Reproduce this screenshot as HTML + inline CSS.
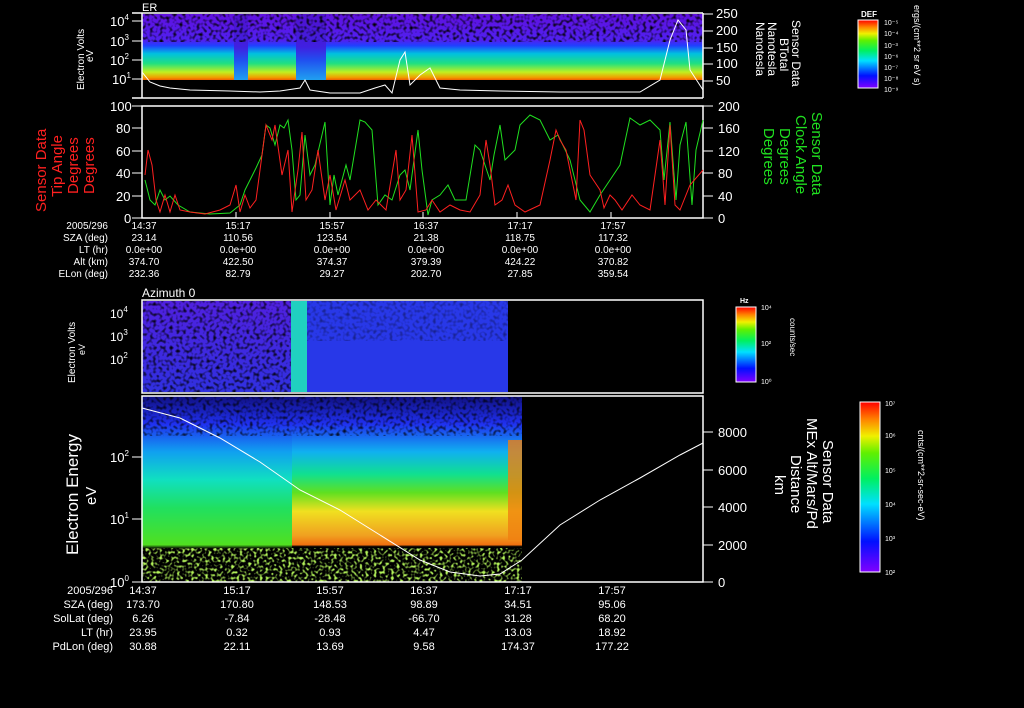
<!DOCTYPE html>
<html><head><meta charset="utf-8"><style>
html,body{margin:0;padding:0;background:#000;}
svg{display:block;font-family:"Liberation Sans",sans-serif;}
</style></head><body>
<svg width="1024" height="708" viewBox="0 0 1024 708" xmlns="http://www.w3.org/2000/svg">
<defs>
<linearGradient id="p1" x1="0" y1="0" x2="0" y2="1">
<stop offset="0" stop-color="#6010e0"/><stop offset="0.4" stop-color="#5020f0"/><stop offset="0.48" stop-color="#2040ff"/><stop offset="0.6" stop-color="#00c0e0"/><stop offset="0.75" stop-color="#20e080"/><stop offset="0.88" stop-color="#c0f020"/><stop offset="0.96" stop-color="#f0a000"/><stop offset="1" stop-color="#f06000"/>
</linearGradient>
<linearGradient id="p1b" x1="0" y1="0" x2="0" y2="1">
<stop offset="0" stop-color="#5010d0"/><stop offset="0.5" stop-color="#4020e0"/><stop offset="0.7" stop-color="#2050f0"/><stop offset="1" stop-color="#20a0f0"/>
</linearGradient>
<linearGradient id="p3" x1="0" y1="0" x2="0" y2="1">
<stop offset="0" stop-color="#5020e0"/><stop offset="1" stop-color="#3030e0"/>
</linearGradient>
<linearGradient id="p4a" x1="0" y1="0" x2="0" y2="1">
<stop offset="0" stop-color="#101080"/><stop offset="0.15" stop-color="#2030f0"/><stop offset="0.3" stop-color="#10a0f0"/><stop offset="0.45" stop-color="#10e0c0"/><stop offset="0.6" stop-color="#20e060"/><stop offset="0.8" stop-color="#50e020"/><stop offset="0.82" stop-color="#000"/><stop offset="1" stop-color="#000"/>
</linearGradient>
<linearGradient id="p4b" x1="0" y1="0" x2="0" y2="1">
<stop offset="0" stop-color="#101080"/><stop offset="0.15" stop-color="#2030f0"/><stop offset="0.3" stop-color="#10b0f0"/><stop offset="0.42" stop-color="#10e090"/><stop offset="0.52" stop-color="#60e020"/><stop offset="0.62" stop-color="#f0e020"/><stop offset="0.75" stop-color="#f0a020"/><stop offset="0.8" stop-color="#f07010"/><stop offset="0.81" stop-color="#000"/><stop offset="1" stop-color="#000"/>
</linearGradient>
<linearGradient id="cb" x1="0" y1="1" x2="0" y2="0">
<stop offset="0" stop-color="#8000ff"/><stop offset="0.18" stop-color="#0010ff"/><stop offset="0.4" stop-color="#00e0ff"/><stop offset="0.55" stop-color="#00f060"/><stop offset="0.7" stop-color="#60f000"/><stop offset="0.8" stop-color="#f0f000"/><stop offset="0.9" stop-color="#ff8000"/><stop offset="1" stop-color="#ff0000"/>
</linearGradient>
<filter id="noise" x="0" y="0" width="1" height="1"><feTurbulence type="fractalNoise" baseFrequency="0.3" numOctaves="1" seed="3"/><feColorMatrix values="0 0 0 0 0  0 0 0 0 0  0 0 0 0 0  0 0 0 -3 1.6"/></filter>
<filter id="gspeck" x="0" y="0" width="1" height="1"><feTurbulence type="fractalNoise" baseFrequency="0.35" numOctaves="1" seed="7"/><feColorMatrix values="0 0 0 0 0.45  0 0 0 0 0.9  0 0 0 0 0.1  0 0 0 -4 2.1"/></filter>
</defs>

<!-- Panel 1 -->
<rect x="142" y="14" width="561" height="66" fill="url(#p1)"/>
<rect x="234" y="14" width="14" height="66" fill="url(#p1b)"/>
<rect x="296" y="14" width="30" height="66" fill="url(#p1b)"/>
<rect x="142" y="14" width="561" height="28" filter="url(#noise)"/>
<polyline fill="none" stroke="#fff" stroke-width="1" points="142,72 150,82 160,86 170,88 190,90 230,91 260,92 280,91 300,88 305,80 310,90 330,93 360,93 375,88 385,85 392,93 400,60 405,52 410,85 420,75 430,68 440,88 460,90 500,91 560,92 640,92 660,80 670,40 678,20 686,30 690,70 703,90"/>
<g stroke="#fff" fill="none" stroke-width="1.5">
<line x1="132" y1="13" x2="703" y2="13"/><line x1="132" y1="98" x2="703" y2="98"/>
<line x1="142" y1="13" x2="142" y2="98"/><line x1="703" y1="13" x2="703" y2="98"/>
</g>
<g stroke="#fff" stroke-width="1">
<line x1="132" y1="21" x2="142" y2="21"/><line x1="132" y1="41" x2="142" y2="41"/><line x1="132" y1="60" x2="142" y2="60"/><line x1="132" y1="79" x2="142" y2="79"/>
<line x1="703" y1="14" x2="713" y2="14"/><line x1="703" y1="31" x2="713" y2="31"/><line x1="703" y1="48" x2="713" y2="48"/><line x1="703" y1="64" x2="713" y2="64"/><line x1="703" y1="81" x2="713" y2="81"/>
</g>
<g fill="#fff" font-size="13">
<text x="142" y="11" font-size="11">ER</text>
<text x="110" y="26">10<tspan font-size="8" dy="-6">4</tspan></text>
<text x="110" y="46">10<tspan font-size="8" dy="-6">3</tspan></text>
<text x="110" y="65">10<tspan font-size="8" dy="-6">2</tspan></text>
<text x="112" y="84">10<tspan font-size="8" dy="-6">1</tspan></text>
<text x="716" y="18">250</text><text x="716" y="35">200</text><text x="716" y="52">150</text><text x="716" y="68">100</text><text x="716" y="85">50</text>
</g>
<text transform="translate(84,90) rotate(-90)" fill="#fff" font-size="10">Electron Volts</text>
<text transform="translate(93,62) rotate(-90)" fill="#fff" font-size="10">eV</text>
<g fill="#fff" font-size="12">
<text transform="translate(792,20) rotate(90)">Sensor Data</text>
<text transform="translate(780,38) rotate(90)">BTotal</text>
<text transform="translate(768,22) rotate(90)">Nanotesla</text>
<text transform="translate(756,22) rotate(90)">Nanotesla</text>
</g>
<rect x="858" y="20" width="20" height="68" fill="url(#cb)" stroke="#fff"/>
<text x="861" y="17" fill="#fff" font-size="8" font-weight="bold">DEF</text>
<g fill="#fff" font-size="7"><text x="884" y="25">10⁻⁵</text><text x="884" y="36">10⁻⁴</text><text x="884" y="48">10⁻³</text><text x="884" y="59">10⁻⁶</text><text x="884" y="70">10⁻⁷</text><text x="884" y="81">10⁻⁸</text><text x="884" y="92">10⁻⁹</text></g>
<text transform="translate(914,5) rotate(90)" fill="#fff" font-size="9">ergs/(cm**2 sr eV s)</text>

<!-- Panel 2 -->
<g stroke="#fff" fill="none" stroke-width="1.5">
<rect x="142" y="106" width="561" height="112"/>
</g>
<g stroke="#fff" stroke-width="1">
<line x1="132" y1="106" x2="142" y2="106"/><line x1="132" y1="128" x2="142" y2="128"/><line x1="132" y1="151" x2="142" y2="151"/><line x1="132" y1="173" x2="142" y2="173"/><line x1="132" y1="196" x2="142" y2="196"/><line x1="132" y1="218" x2="142" y2="218"/>
<line x1="703" y1="106" x2="713" y2="106"/><line x1="703" y1="128" x2="713" y2="128"/><line x1="703" y1="151" x2="713" y2="151"/><line x1="703" y1="173" x2="713" y2="173"/><line x1="703" y1="196" x2="713" y2="196"/><line x1="703" y1="218" x2="713" y2="218"/>
<line x1="236" y1="218" x2="236" y2="212"/><line x1="330" y1="218" x2="330" y2="212"/><line x1="423" y1="218" x2="423" y2="212"/><line x1="517" y1="218" x2="517" y2="212"/><line x1="611" y1="218" x2="611" y2="212"/>
</g>
<polyline fill="none" stroke="#20e020" stroke-width="1" points="145,180 150,200 155,205 160,190 165,200 170,196 178,205 190,212 210,214 230,213 240,205 245,190 250,180 256,168 262,155 266,125 270,128 275,145 280,125 284,128 288,120 292,150 296,200 300,195 305,135 310,175 315,165 325,122 330,205 334,175 338,195 346,165 350,180 360,120 365,122 372,130 378,205 385,195 392,200 400,175 405,170 410,190 418,130 422,170 428,215 432,200 440,195 448,185 455,200 466,200 475,145 480,150 485,165 490,180 494,155 500,125 505,160 510,155 515,150 520,125 530,115 540,120 550,140 558,135 570,160 580,200 590,212 600,195 610,180 620,165 630,118 640,125 650,120 660,130 664,180 670,122 676,200 680,145 686,122 692,205 696,150 703,120"/>
<polyline fill="none" stroke="#ff2020" stroke-width="1" points="145,175 148,150 152,165 156,200 160,212 165,195 170,212 175,195 180,210 190,212 205,214 220,210 230,205 236,185 240,212 245,195 250,208 256,200 262,155 266,125 272,140 275,125 282,175 288,150 292,212 298,170 302,132 306,200 312,190 318,150 325,200 330,175 336,210 345,180 350,200 360,190 368,210 376,200 386,210 396,150 400,200 406,190 412,135 418,212 426,210 432,200 440,212 450,205 460,210 470,212 480,195 486,140 490,165 495,205 502,200 508,185 515,205 525,212 540,205 550,160 556,130 560,140 566,150 572,180 576,200 580,120 584,130 590,175 600,190 604,208 610,195 615,200 622,210 632,195 640,205 650,210 660,140 665,205 670,125 675,205 680,210 690,185 703,170"/>
<g fill="#fff" font-size="13">
<text x="110" y="111">100</text><text x="116" y="133">80</text><text x="116" y="156">60</text><text x="116" y="178">40</text><text x="116" y="201">20</text><text x="124" y="223">0</text>
<text x="718" y="111">200</text><text x="718" y="133">160</text><text x="718" y="156">120</text><text x="718" y="178">80</text><text x="718" y="201">40</text><text x="718" y="223">0</text>
</g>
<g fill="#ff2020" font-size="15">
<text transform="translate(46,212) rotate(-90)">Sensor Data</text>
<text transform="translate(62,197) rotate(-90)">Tip Angle</text>
<text transform="translate(78,194) rotate(-90)">Degrees</text>
<text transform="translate(94,194) rotate(-90)">Degrees</text>
</g>
<g fill="#20e020" font-size="15">
<text transform="translate(812,112) rotate(90)">Sensor Data</text>
<text transform="translate(796,115) rotate(90)">Clock Angle</text>
<text transform="translate(780,128) rotate(90)">Degrees</text>
<text transform="translate(764,128) rotate(90)">Degrees</text>
</g>
<g fill="#fff" font-size="10">
<g text-anchor="end"><text x="108" y="229">2005/296</text><text x="108" y="241">SZA (deg)</text><text x="108" y="253">LT (hr)</text><text x="108" y="265">Alt (km)</text><text x="108" y="277">ELon (deg)</text></g>
<g text-anchor="middle">
<text x="144" y="229">14:37</text><text x="144" y="241">23.14</text><text x="144" y="253">0.0e+00</text><text x="144" y="265">374.70</text><text x="144" y="277">232.36</text>
<text x="238" y="229">15:17</text><text x="238" y="241">110.56</text><text x="238" y="253">0.0e+00</text><text x="238" y="265">422.50</text><text x="238" y="277">82.79</text>
<text x="332" y="229">15:57</text><text x="332" y="241">123.54</text><text x="332" y="253">0.0e+00</text><text x="332" y="265">374.37</text><text x="332" y="277">29.27</text>
<text x="426" y="229">16:37</text><text x="426" y="241">21.38</text><text x="426" y="253">0.0e+00</text><text x="426" y="265">379.39</text><text x="426" y="277">202.70</text>
<text x="520" y="229">17:17</text><text x="520" y="241">118.75</text><text x="520" y="253">0.0e+00</text><text x="520" y="265">424.22</text><text x="520" y="277">27.85</text>
<text x="613" y="229">17:57</text><text x="613" y="241">117.32</text><text x="613" y="253">0.0e+00</text><text x="613" y="265">370.82</text><text x="613" y="277">359.54</text>
</g></g>

<!-- Panel 3 -->
<text x="142" y="297" fill="#fff" font-size="12">Azimuth 0</text>
<rect x="142" y="301" width="366" height="91" fill="url(#p3)"/>
<rect x="291" y="301" width="16" height="91" fill="#20d0c0"/>
<rect x="307" y="301" width="201" height="91" fill="#2838e8"/>
<rect x="142" y="301" width="149" height="91" filter="url(#noise)" opacity="0.9"/>
<rect x="307" y="301" width="201" height="40" filter="url(#noise)" opacity="0.4"/>
<g stroke="#fff" fill="none" stroke-width="1.5"><rect x="142" y="300" width="561" height="93"/></g>
<g fill="#fff" font-size="12"><text x="110" y="318">10<tspan font-size="8" dy="-6">4</tspan></text><text x="110" y="341">10<tspan font-size="8" dy="-6">3</tspan></text><text x="110" y="364">10<tspan font-size="8" dy="-6">2</tspan></text></g>
<text transform="translate(75,383) rotate(-90)" fill="#fff" font-size="10">Electron Volts</text>
<text transform="translate(85,355) rotate(-90)" fill="#fff" font-size="9">eV</text>
<rect x="736" y="307" width="20" height="75" fill="url(#cb)" stroke="#fff"/>
<text x="740" y="303" fill="#fff" font-size="7" font-weight="bold">Hz</text>
<g fill="#fff" font-size="7"><text x="761" y="310">10⁴</text><text x="761" y="346">10²</text><text x="761" y="384">10⁰</text></g>
<text transform="translate(790,318) rotate(90)" fill="#fff" font-size="8">counts/sec</text>

<!-- Panel 4 -->
<rect x="142" y="396" width="150" height="186" fill="url(#p4a)"/>
<rect x="292" y="396" width="230" height="186" fill="url(#p4b)"/>
<rect x="142" y="396" width="380" height="40" filter="url(#noise)" opacity="0.8"/>
<rect x="142" y="548" width="380" height="34" filter="url(#gspeck)"/>
<rect x="508" y="440" width="14" height="100" fill="#f08010" opacity="0.8"/>
<polyline fill="none" stroke="#fff" stroke-width="1" points="142,408 180,418 220,438 260,462 300,490 340,510 380,535 420,560 450,572 480,576 500,574 522,560 560,525 600,500 640,478 680,455 703,443"/>
<g stroke="#fff" fill="none" stroke-width="1.5"><rect x="142" y="396" width="561" height="186"/></g>
<g stroke="#fff" stroke-width="1">
<line x1="703" y1="432" x2="713" y2="432"/><line x1="703" y1="470" x2="713" y2="470"/><line x1="703" y1="507" x2="713" y2="507"/><line x1="703" y1="545" x2="713" y2="545"/><line x1="703" y1="582" x2="713" y2="582"/>
<line x1="132" y1="457" x2="142" y2="457"/><line x1="132" y1="519" x2="142" y2="519"/><line x1="132" y1="582" x2="142" y2="582"/>
</g>
<g fill="#fff" font-size="13">
<text x="110" y="462">10<tspan font-size="8" dy="-6">2</tspan></text><text x="110" y="524">10<tspan font-size="8" dy="-6">1</tspan></text><text x="110" y="587">10<tspan font-size="8" dy="-6">0</tspan></text>
<text x="718" y="437">8000</text><text x="718" y="475">6000</text><text x="718" y="512">4000</text><text x="718" y="550">2000</text><text x="718" y="587">0</text>
</g>
<text transform="translate(78,555) rotate(-90)" fill="#fff" font-size="17">Electron Energy</text>
<text transform="translate(96,505) rotate(-90)" fill="#fff" font-size="15">eV</text>
<g fill="#fff" font-size="15">
<text transform="translate(823,440) rotate(90)">Sensor Data</text>
<text transform="translate(807,418) rotate(90)">MEx Alt/Mars/Pd</text>
<text transform="translate(791,455) rotate(90)">Distance</text>
<text transform="translate(775,475) rotate(90)">km</text>
</g>
<rect x="860" y="402" width="20" height="170" fill="url(#cb)" stroke="#fff"/>
<g fill="#fff" font-size="7"><text x="885" y="406">10⁷</text><text x="885" y="438">10⁶</text><text x="885" y="473">10⁵</text><text x="885" y="507">10⁴</text><text x="885" y="541">10³</text><text x="885" y="575">10²</text></g>
<text transform="translate(918,430) rotate(90)" fill="#fff" font-size="9">cnts/(cm**2-sr-sec-eV)</text>
<g fill="#fff" font-size="11">
<g text-anchor="end"><text x="113" y="594">2005/296</text><text x="113" y="608">SZA (deg)</text><text x="113" y="622">SolLat (deg)</text><text x="113" y="636">LT (hr)</text><text x="113" y="650">PdLon (deg)</text></g>
<g text-anchor="middle">
<text x="143" y="594">14:37</text><text x="143" y="608">173.70</text><text x="143" y="622">6.26</text><text x="143" y="636">23.95</text><text x="143" y="650">30.88</text>
<text x="237" y="594">15:17</text><text x="237" y="608">170.80</text><text x="237" y="622">-7.84</text><text x="237" y="636">0.32</text><text x="237" y="650">22.11</text>
<text x="330" y="594">15:57</text><text x="330" y="608">148.53</text><text x="330" y="622">-28.48</text><text x="330" y="636">0.93</text><text x="330" y="650">13.69</text>
<text x="424" y="594">16:37</text><text x="424" y="608">98.89</text><text x="424" y="622">-66.70</text><text x="424" y="636">4.47</text><text x="424" y="650">9.58</text>
<text x="518" y="594">17:17</text><text x="518" y="608">34.51</text><text x="518" y="622">31.28</text><text x="518" y="636">13.03</text><text x="518" y="650">174.37</text>
<text x="612" y="594">17:57</text><text x="612" y="608">95.06</text><text x="612" y="622">68.20</text><text x="612" y="636">18.92</text><text x="612" y="650">177.22</text>
</g></g>
</svg>
</body></html>
